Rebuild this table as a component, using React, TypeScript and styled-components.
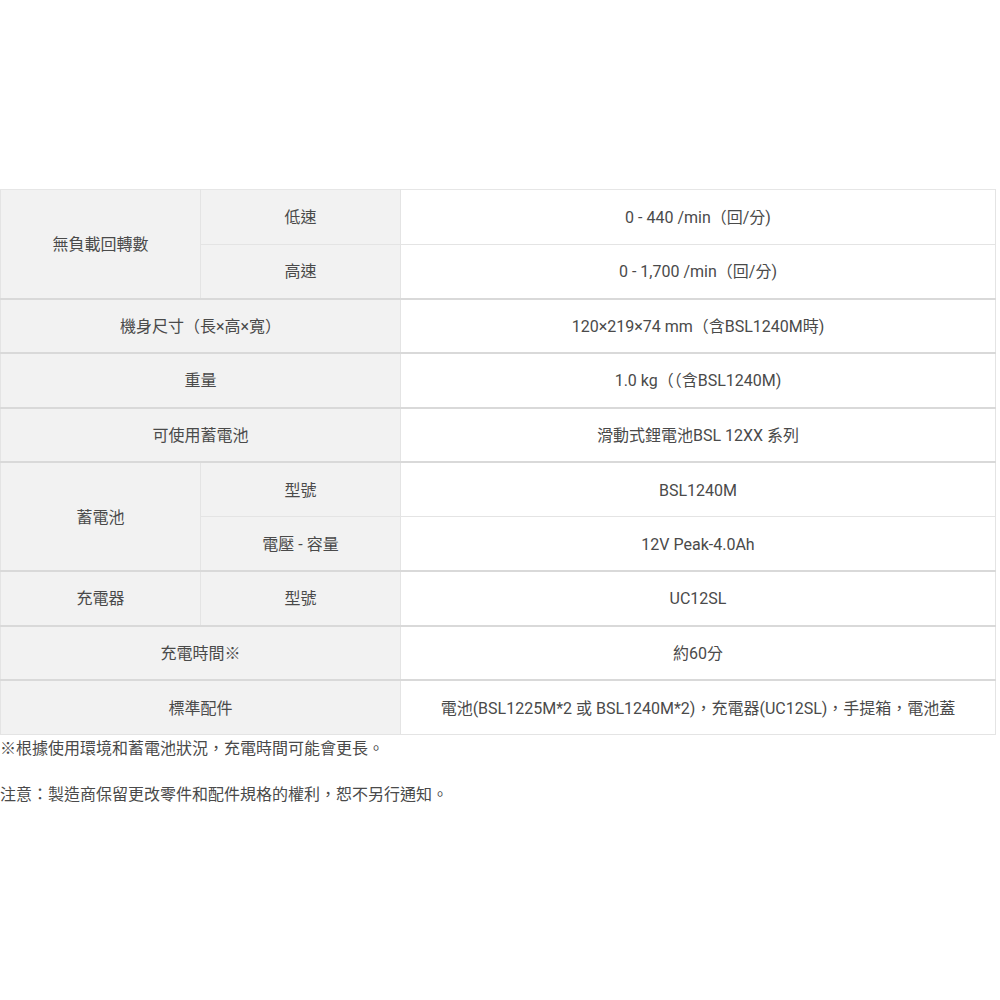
import React from 'react';
import styled, { createGlobalStyle } from 'styled-components';

const GlobalStyle = createGlobalStyle`
  html, body {
    margin: 0;
    padding: 0;
    background: #ffffff;
  }
  body {
    font-family: Roboto, "Noto Sans CJK TC", sans-serif;
    color: #4a4a4a;
  }
`;

const Page = styled.div`
  width: 1000px;
  padding-top: 189px;
  box-sizing: border-box;
`;

const SpecTable = styled.table`
  width: 996px;
  border-collapse: collapse;
  table-layout: fixed;
  font-size: 16px;
  color: #4a4a4a;
`;

const Row = styled.tr<{ $groupStart?: boolean }>`
  height: 54.5px;
  & > td {
    border-top: ${(p) => (p.$groupStart ? '2px solid #d9d9d9' : '1px solid #e6e6e6')};
  }
`;

const Cell = styled.td<{ $label?: boolean }>`
  border: 1px solid #e4e4e4;
  background: ${(p) => (p.$label ? '#f2f2f2' : '#ffffff')};
  text-align: center;
  vertical-align: middle;
  padding: 2px 8px 0 8px;
  line-height: 20px;
  white-space: nowrap;
`;

const Notes = styled.div`
  font-size: 16px;
  color: #4a4a4a;
  line-height: 20px;
`;

const Note = styled.p<{ $gap?: number }>`
  margin: ${(p) => p.$gap ?? 0}px 0 0 0;
`;

const App = () => {
  return (
    <Page>
      <GlobalStyle />
      <SpecTable>
        <colgroup>
          <col style={{ width: 200 }} />
          <col style={{ width: 200 }} />
          <col />
        </colgroup>
        <tbody>
          <Row>
            <Cell $label rowSpan={2}>無負載回轉數</Cell>
            <Cell $label>低速</Cell>
            <Cell>0 - 440 /min（回/分)</Cell>
          </Row>
          <Row>
            <Cell $label>高速</Cell>
            <Cell>0 - 1,700 /min（回/分)</Cell>
          </Row>
          <Row $groupStart>
            <Cell $label colSpan={2}>機身尺寸（長×高×寬）</Cell>
            <Cell>120×219×74 mm（含BSL1240M時)</Cell>
          </Row>
          <Row $groupStart>
            <Cell $label colSpan={2}>重量</Cell>
            <Cell>1.0 kg（（含BSL1240M)</Cell>
          </Row>
          <Row $groupStart>
            <Cell $label colSpan={2}>可使用蓄電池</Cell>
            <Cell>滑動式鋰電池BSL 12XX 系列</Cell>
          </Row>
          <Row $groupStart>
            <Cell $label rowSpan={2}>蓄電池</Cell>
            <Cell $label>型號</Cell>
            <Cell>BSL1240M</Cell>
          </Row>
          <Row>
            <Cell $label>電壓 - 容量</Cell>
            <Cell>12V Peak-4.0Ah</Cell>
          </Row>
          <Row $groupStart>
            <Cell $label>充電器</Cell>
            <Cell $label>型號</Cell>
            <Cell>UC12SL</Cell>
          </Row>
          <Row $groupStart>
            <Cell $label colSpan={2}>充電時間※</Cell>
            <Cell>約60分</Cell>
          </Row>
          <Row $groupStart>
            <Cell $label colSpan={2}>標準配件</Cell>
            <Cell>電池(BSL1225M*2 或 BSL1240M*2)，充電器(UC12SL)，手提箱，電池蓋</Cell>
          </Row>
        </tbody>
      </SpecTable>
      <Notes>
        <Note $gap={4}>※根據使用環境和蓄電池狀況，充電時間可能會更長。</Note>
        <Note $gap={26}>注意：製造商保留更改零件和配件規格的權利，恕不另行通知。</Note>
      </Notes>
    </Page>
  );
};

export default App;
